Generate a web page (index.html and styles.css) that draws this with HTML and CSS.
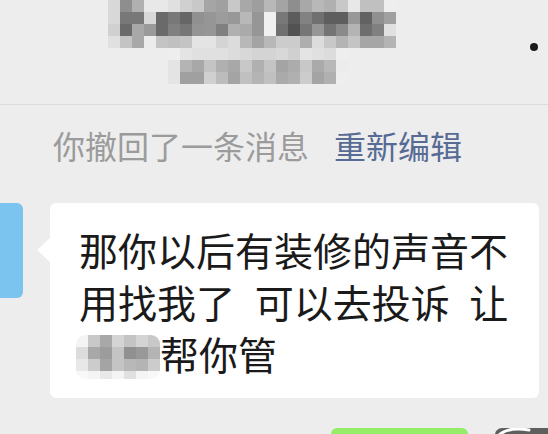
FILE: index.html
```html
<!DOCTYPE html>
<html lang="zh-CN">
<head>
<meta charset="utf-8">
<title>聊天</title>
<link rel="stylesheet" href="styles.css">
</head>
<body>
<div class="page">
  <header class="header">
    <svg class="mz title-mosaic" width="288" height="84" viewBox="0 0 288 84" aria-hidden="true">
      <g>
        <rect x="0" y="0" fill="#d8d8d8"/><rect x="12" y="0" fill="#8e8e8e"/><rect x="24" y="0" fill="#b0b0b0"/><rect x="36" y="0" fill="#e8e8e8"/><rect x="48" y="0" fill="#e8e8e8"/><rect x="60" y="0" fill="#e0e0e0"/><rect x="72" y="0" fill="#d0d0d0"/><rect x="84" y="0" fill="#c8c8c8"/><rect x="96" y="0" fill="#a5a5a5"/><rect x="108" y="0" fill="#a0a0a0"/><rect x="120" y="0" fill="#c8c8c8"/><rect x="132" y="0" fill="#a8a8a8"/><rect x="144" y="0" fill="#9e9e9e"/><rect x="156" y="0" fill="#b8b8b8"/><rect x="168" y="0" fill="#a4a4a4"/><rect x="180" y="0" fill="#8e8e8e"/><rect x="192" y="0" fill="#a8a8a8"/><rect x="204" y="0" fill="#b8b8b8"/><rect x="216" y="0" fill="#b0b0b0"/><rect x="228" y="0" fill="#c8c8c8"/><rect x="240" y="0" fill="#e8e8e8"/><rect x="252" y="0" fill="#c0c0c0"/><rect x="264" y="0" fill="#c0c0c0"/><rect x="276" y="0" fill="#eeeeee"/>
        <rect x="0" y="12" fill="#d8d8d8"/><rect x="12" y="12" fill="#787878"/><rect x="24" y="12" fill="#787878"/><rect x="36" y="12" fill="#d8d8d8"/><rect x="48" y="12" fill="#6a6a6a"/><rect x="60" y="12" fill="#787878"/><rect x="72" y="12" fill="#666666"/><rect x="84" y="12" fill="#909090"/><rect x="96" y="12" fill="#969696"/><rect x="108" y="12" fill="#9c9c9c"/><rect x="120" y="12" fill="#989898"/><rect x="132" y="12" fill="#b8b8b8"/><rect x="144" y="12" fill="#969696"/><rect x="156" y="12" fill="#f0f0f0"/><rect x="168" y="12" fill="#787878"/><rect x="180" y="12" fill="#5c5c5c"/><rect x="192" y="12" fill="#828282"/><rect x="204" y="12" fill="#707070"/><rect x="216" y="12" fill="#5e5e5e"/><rect x="228" y="12" fill="#5e5e5e"/><rect x="240" y="12" fill="#989898"/><rect x="252" y="12" fill="#626262"/><rect x="264" y="12" fill="#909090"/><rect x="276" y="12" fill="#a0a0a0"/>
        <rect x="0" y="24" fill="#d0d0d0"/><rect x="12" y="24" fill="#6a6a6a"/><rect x="24" y="24" fill="#a8a8a8"/><rect x="36" y="24" fill="#9a9a9a"/><rect x="48" y="24" fill="#6a6a6a"/><rect x="60" y="24" fill="#808080"/><rect x="72" y="24" fill="#767676"/><rect x="84" y="24" fill="#949494"/><rect x="96" y="24" fill="#969696"/><rect x="108" y="24" fill="#808080"/><rect x="120" y="24" fill="#b0b0b0"/><rect x="132" y="24" fill="#aaaaaa"/><rect x="144" y="24" fill="#969696"/><rect x="156" y="24" fill="#f0f0f0"/><rect x="168" y="24" fill="#707070"/><rect x="180" y="24" fill="#525252"/><rect x="192" y="24" fill="#767676"/><rect x="204" y="24" fill="#969696"/><rect x="216" y="24" fill="#747474"/><rect x="228" y="24" fill="#8a8a8a"/><rect x="240" y="24" fill="#b4b4b4"/><rect x="252" y="24" fill="#6e6e6e"/><rect x="264" y="24" fill="#808080"/><rect x="276" y="24" fill="#e0e0e0"/>
        <rect x="0" y="36" fill="#e0e0e0"/><rect x="12" y="36" fill="#c4c4c4"/><rect x="24" y="36" fill="#a8a8a8"/><rect x="36" y="36" fill="#ececec"/><rect x="48" y="36" fill="#c4c4c4"/><rect x="60" y="36" fill="#c0c0c0"/><rect x="72" y="36" fill="#c4c4c4"/><rect x="84" y="36" fill="#e4e4e4"/><rect x="96" y="36" fill="#e4e4e4"/><rect x="108" y="36" fill="#d4d4d4"/><rect x="120" y="36" fill="#dcdcdc"/><rect x="132" y="36" fill="#b8b8b8"/><rect x="144" y="36" fill="#a4a4a4"/><rect x="156" y="36" fill="#b8b8b8"/><rect x="168" y="36" fill="#cccccc"/><rect x="180" y="36" fill="#cccccc"/><rect x="192" y="36" fill="#aeaeae"/><rect x="204" y="36" fill="#dcdcdc"/><rect x="216" y="36" fill="#c8c8c8"/><rect x="228" y="36" fill="#b4b4b4"/><rect x="240" y="36" fill="#c4c4c4"/><rect x="252" y="36" fill="#a6a6a6"/><rect x="264" y="36" fill="#a6a6a6"/><rect x="276" y="36" fill="#b4b4b4"/>
      </g>
      <g transform="translate(60 0)">
        <rect x="0" y="48" fill="#eeeeee"/><rect x="12" y="48" fill="#e4e4e4"/><rect x="24" y="48" fill="#e0e0e0"/><rect x="36" y="48" fill="#e0e0e0"/><rect x="48" y="48" fill="#e0e0e0"/><rect x="60" y="48" fill="#dcdcdc"/><rect x="72" y="48" fill="#d8d8d8"/><rect x="84" y="48" fill="#d4d4d4"/><rect x="96" y="48" fill="#d4d4d4"/><rect x="108" y="48" fill="#d8d8d8"/><rect x="120" y="48" fill="#d0d0d0"/><rect x="132" y="48" fill="#e4e4e4"/><rect x="144" y="48" fill="#e0e0e0"/><rect x="156" y="48" fill="#dcdcdc"/><rect x="168" y="48" fill="#eeeeee"/>
        <rect x="0" y="60" fill="#e4e4e4"/><rect x="12" y="60" fill="#b4b4b4"/><rect x="24" y="60" fill="#a8a8a8"/><rect x="36" y="60" fill="#c4c4c4"/><rect x="48" y="60" fill="#b0b0b0"/><rect x="60" y="60" fill="#a8a8a8"/><rect x="72" y="60" fill="#c8c8c8"/><rect x="84" y="60" fill="#b0b0b0"/><rect x="96" y="60" fill="#c4c4c4"/><rect x="108" y="60" fill="#a4a4a4"/><rect x="120" y="60" fill="#acacac"/><rect x="132" y="60" fill="#c8c8c8"/><rect x="144" y="60" fill="#aaaaaa"/><rect x="156" y="60" fill="#b8b8b8"/><rect x="168" y="60" fill="#ececec"/>
        <rect x="0" y="72" fill="#e4e4e4"/><rect x="12" y="72" fill="#a0a0a0"/><rect x="24" y="72" fill="#a0a0a0"/><rect x="36" y="72" fill="#d0d0d0"/><rect x="48" y="72" fill="#bcbcbc"/><rect x="60" y="72" fill="#a4a4a4"/><rect x="72" y="72" fill="#c0c0c0"/><rect x="84" y="72" fill="#b4b4b4"/><rect x="96" y="72" fill="#c0c0c0"/><rect x="108" y="72" fill="#aaaaaa"/><rect x="120" y="72" fill="#b0b0b0"/><rect x="132" y="72" fill="#cccccc"/><rect x="144" y="72" fill="#a4a4a4"/><rect x="156" y="72" fill="#b0b0b0"/><rect x="168" y="72" fill="#eeeeee"/>
      </g>
    </svg>
    <span class="more-dot"></span>
  </header>

  <p class="recall">你撤回了一条消息<span class="re-edit">重新编辑</span></p>

  <div class="msg-in">
    <div class="avatar-left"></div>
    <div class="bubble-in">那你以后有装修的声音不用找我了 可以去投诉 让<svg class="mz name-mosaic" width="84" height="44" viewBox="0 0 84 44" aria-hidden="true"><defs><clipPath id="nm-clip"><rect class="clip" x="0" y="0" rx="9" ry="9"/></clipPath></defs><g clip-path="url(#nm-clip)"><rect x="0" y="0" fill="#f4f4f4"/><rect x="12" y="0" fill="#c8c8c8"/><rect x="24" y="0" fill="#a8a8a8"/><rect x="36" y="0" fill="#d4d4d4"/><rect x="48" y="0" fill="#c4c4c4"/><rect x="60" y="0" fill="#d4d4d4"/><rect x="72" y="0" fill="#c8c8c8"/><rect x="0" y="12" fill="#dcdcdc"/><rect x="12" y="12" fill="#a8a8a8"/><rect x="24" y="12" fill="#9c9c9c"/><rect x="36" y="12" fill="#c4c4c4"/><rect x="48" y="12" fill="#909090"/><rect x="60" y="12" fill="#989898"/><rect x="72" y="12" fill="#b4b4b4"/><rect x="0" y="24" fill="#e8e8e8"/><rect x="12" y="24" fill="#cccccc"/><rect x="24" y="24" fill="#a4a4a4"/><rect x="36" y="24" fill="#c4c4c4"/><rect x="48" y="24" fill="#b8b8b8"/><rect x="60" y="24" fill="#b4b4b4"/><rect x="72" y="24" fill="#cccccc"/><rect x="0" y="36" fill="#f8f8f8"/><rect x="12" y="36" fill="#f4f4f4"/><rect x="24" y="36" fill="#e8e8e8"/><rect x="36" y="36" fill="#f4f4f4"/><rect x="48" y="36" fill="#e0e0e0"/><rect x="60" y="36" fill="#f4f4f4"/><rect x="72" y="36" fill="#f8f8f8"/></g></svg>帮你管</div>
  </div>

  <div class="msg-out">
    <div class="bubble-out"></div>
    <svg class="avatar-right" width="53" height="40" viewBox="0 0 53 40" aria-hidden="true">
      <rect x="0" y="0" width="60" height="40" rx="7" fill="#5e5e5e"/>
      <path d="M3 8 C10 1, 22 0, 34 2" stroke="#ffffff" stroke-width="3" fill="none" stroke-linecap="round"/>
    </svg>
  </div>
</div>
</body>
</html>
```

FILE: styles.css
```css
html, body {
  margin: 0;
  padding: 0;
}

body {
  background: #ededed;
  font-family: "Noto Sans CJK SC", "Noto Sans", sans-serif;
}

.page {
  width: 548px;
  height: 434px;
  overflow: hidden;
  background: #ededed;
}

.header {
  display: flex;
  align-items: flex-start;
  height: 104px;
  border-bottom: 1px solid #dcdcdc;
}

.title-mosaic {
  display: block;
  margin-left: 108px;
  flex: none;
}

.mz rect {
  width: 12px;
  height: 12px;
}

.mz rect.clip {
  width: 84px;
  height: 44px;
}

.more-dot {
  width: 8px;
  height: 8px;
  border-radius: 50%;
  background: #1b1b1b;
  margin: 43px 10px 0 auto;
  flex: none;
}

.recall {
  margin: 20px 0 0;
  padding-left: 53px;
  font-size: 32px;
  line-height: 40px;
  color: #9b9b9b;
  white-space: nowrap;
}

.re-edit {
  color: #576b95;
  margin-left: 25px;
}

.msg-in {
  display: flex;
  align-items: flex-start;
  margin-top: 38px;
}

.avatar-left {
  flex: none;
  width: 23px;
  height: 95px;
  background: #7bc4f0;
  border-radius: 0 6px 6px 0;
}

.bubble-in {
  position: relative;
  flex: none;
  box-sizing: border-box;
  width: 489px;
  margin-left: 27px;
  padding: 20px 25px 19px 29px;
  background: #ffffff;
  border-radius: 6px;
  font-size: 39px;
  line-height: 52px;
  color: #1a1a1a;
  word-spacing: 0.28em;
}

.bubble-in::before {
  content: "";
  position: absolute;
  left: -13px;
  top: 35px;
  border-style: solid;
  border-width: 12px 13px 12px 0;
  border-color: transparent #ffffff transparent transparent;
}

.name-mosaic {
  display: inline-block;
  vertical-align: top;
  margin: 8px 0 0 -3px;
}

.msg-out {
  display: flex;
  align-items: flex-start;
  margin-top: 30px;
}

.bubble-out {
  flex: none;
  width: 137px;
  height: 40px;
  margin-left: 331px;
  background: #95ec69;
  border-radius: 6px;
}

.avatar-right {
  display: block;
  flex: none;
  margin-left: 27px;
}
```
